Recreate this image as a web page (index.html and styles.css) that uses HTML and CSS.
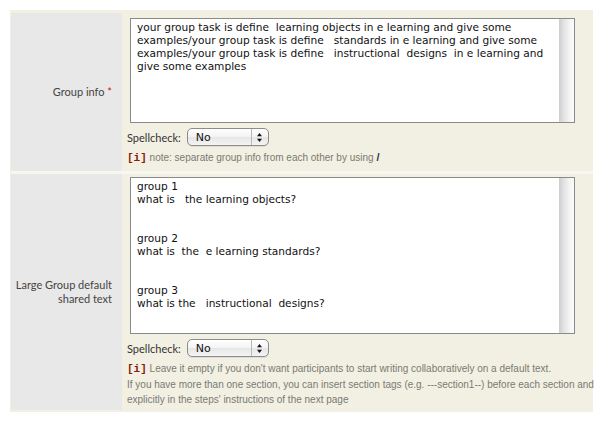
FILE: index.html
```html
<!DOCTYPE html>
<html>
<head>
<meta charset="utf-8">
<link rel="stylesheet" href="styles.css">
</head>
<body>
<div class="form">
  <div class="row">
    <div class="label">Group info&nbsp;<span class="req">*</span></div>
    <div class="field">
      <div class="tabox tabox1">
        <textarea class="ta">your group task is define  learning objects in e learning and give some examples/your group task is define   standards in e learning and give some examples/your group task is define   instructional  designs  in e learning and give some examples</textarea>
        <div class="sb"></div>
      </div>
      <div class="spell">
        <span class="spell-label">Spellcheck:</span>
        <div class="popup"><span class="popup-val">No</span><span class="popup-arrows"><svg width="7" height="11" viewBox="0 0 7 11"><path d="M3.5 1 L6 4.3 L1 4.3 Z" fill="#111"/><path d="M3.5 10 L6 6.7 L1 6.7 Z" fill="#111"/></svg></span></div>
      </div>
      <div class="note"><span class="i">[i]</span> note: separate group info from each other by using <b class="slash">/</b></div>
    </div>
  </div>
  <div class="row row2">
    <div class="label">Large Group default<br>shared text</div>
    <div class="field">
      <div class="tabox tabox2">
        <textarea class="ta">group 1
what is   the learning objects?


group 2
what is  the  e learning standards?


group 3
what is the   instructional  designs?</textarea>
        <div class="sb"></div>
      </div>
      <div class="spell">
        <span class="spell-label">Spellcheck:</span>
        <div class="popup"><span class="popup-val">No</span><span class="popup-arrows"><svg width="7" height="11" viewBox="0 0 7 11"><path d="M3.5 1 L6 4.3 L1 4.3 Z" fill="#111"/><path d="M3.5 10 L6 6.7 L1 6.7 Z" fill="#111"/></svg></span></div>
      </div>
      <div class="note"><span class="i">[i]</span> Leave it empty if you don't want participants to start writing collaboratively on a default text.<br>If you have more than one section, you can insert section tags (e.g. ---section1--) before each section and<br>explicitly in the steps' instructions of the next page</div>
    </div>
  </div>
</div>
</body>
</html>
```
FILE: styles.css
```css
html, body {
  margin: 0;
  padding: 0;
  background: #ffffff;
}

.form {
  margin: 10px 12px 0 10px;
  background: #f2f0e3;
  padding: 3px 0 2px 1px;
}

.row {
  display: grid;
  grid-template-columns: 111px 1fr;
}

.row2 {
  border-top: 3px solid #f7f6ef;
}

.label {
  background: #e8e8e8;
  display: flex;
  align-items: center;
  justify-content: flex-end;
  text-align: right;
  padding-right: 10px;
  font-family: "Lato", "DejaVu Sans", sans-serif;
  font-size: 11px;
  line-height: 14px;
  color: #444;
}

.req {
  color: #cc2222;
}

.field {
  padding: 5px 18px 5px 5px;
  min-width: 0;
}

.row2 .field {
  padding-top: 3px;
  padding-bottom: 3px;
}

.tabox {
  display: flex;
  box-sizing: border-box;
  width: 445px;
  margin-left: 3px;
  border: 1px solid #8a8a8a;
  background: #fff;
}

.tabox1 { height: 105px; }
.tabox2 { height: 157px; }

.ta {
  flex: 1;
  min-width: 0;
  border: none;
  margin: 0;
  background: #fff;
  font-family: "DejaVu Sans", sans-serif;
  font-size: 10.6px;
  line-height: 13px;
  color: #111;
  padding: 2px 0 0 6px;
  resize: none;
  overflow: hidden;
  outline: none;
}

.sb {
  width: 15px;
  flex: none;
  background: linear-gradient(to right, #cdcdcd, #e2e2e2 30%, #f4f4f4 70%, #fbfbfb);
}

.spell {
  display: flex;
  align-items: center;
  gap: 6px;
  margin-top: 5px;
  height: 18px;
}

.spell-label {
  font-family: "Lato", "DejaVu Sans", sans-serif;
  font-size: 11px;
  color: #333;
}

.popup {
  box-sizing: border-box;
  width: 82px;
  height: 18px;
  border: 1px solid #8c8c8c;
  border-radius: 5px;
  background: linear-gradient(to bottom, #ffffff, #f3f3f3 50%, #e6e6e6 51%, #f4f4f4);
  display: flex;
  align-items: center;
  box-shadow: 0 1px 0 rgba(0,0,0,0.08);
}

.popup-val {
  flex: 1;
  padding-left: 8px;
  font-family: "DejaVu Sans", sans-serif;
  font-size: 11px;
  color: #111;
}

.popup-arrows {
  width: 16px;
  height: 100%;
  border-left: 1px solid #b8b8b8;
  display: flex;
  align-items: center;
  justify-content: center;
}

.popup-arrows svg {
  display: block;
}

.note {
  margin-top: 4px;
  font-family: "Liberation Sans", sans-serif;
  font-size: 10px;
  line-height: 15px;
  color: #7a7a72;
  white-space: nowrap;
}

.i {
  font-family: "Liberation Mono", monospace;
  font-weight: bold;
  font-size: 11px;
  color: #8a1a10;
}

.slash {
  color: #333;
  font-size: 11px;
}
```
